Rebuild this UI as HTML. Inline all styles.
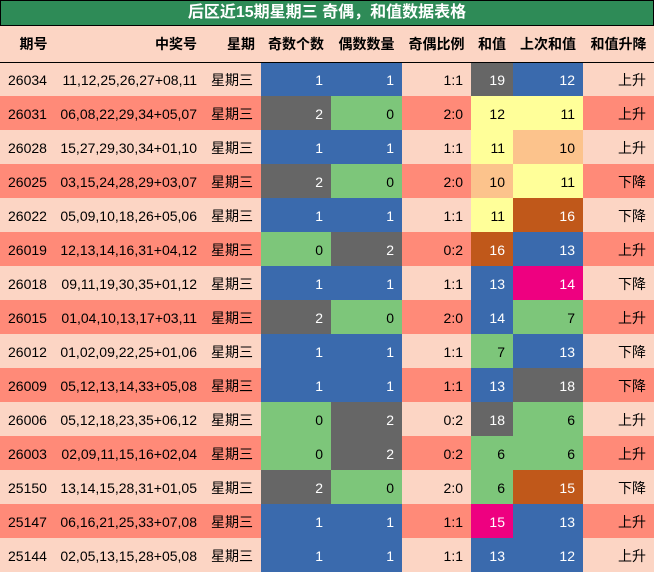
<!DOCTYPE html>
<html><head><meta charset="utf-8"><style>
*{margin:0;padding:0;box-sizing:border-box}
body{width:654px;height:573px;background:#fff;font-family:"Liberation Sans","Noto Sans CJK SC",sans-serif;overflow:hidden}
.title{position:absolute;left:0;top:0;width:654px;height:26px;background:#2e8b57;border:1px solid #000;color:#fff;font-weight:bold;font-size:16px;line-height:24px;text-align:center}
table{position:absolute;left:0;top:26px;border-collapse:collapse;table-layout:fixed;width:654px}
td{height:34px;font-size:14px;text-align:right;padding-right:8px;white-space:nowrap;color:#000;padding-top:2px}
tr.h td{height:36px;font-size:14px;font-weight:bold;text-align:center;padding:0;border-bottom:1px solid #000;background:#fcd5c4}
.p{background:#fcd5c4}.s{background:#ff8a78}
.B{background:#3a6aad;color:#fff}.G{background:#666;color:#fff}.N{background:#7dc67a}.Y{background:#ffff99}.O{background:#fcc38c}.R{background:#c0581a;color:#fff}.M{background:#ee0080;color:#fff}
td.c1{text-align:left;padding:2px 0 0 8px}
td.c2{padding-right:6px}
</style></head><body>
<div class="title">后区近15期星期三 奇偶，和值数据表格</div>
<table>
<colgroup><col style="width:55px"><col style="width:148px"><col style="width:58px"><col style="width:70px"><col style="width:71px"><col style="width:69px"><col style="width:42px"><col style="width:70px"><col style="width:71px"></colgroup>
<tr class="h"><td style="padding-left:12px">期号</td><td style="text-align:right;padding-right:6px">中奖号</td><td style="text-align:right;padding-right:6px">星期</td><td>奇数个数</td><td>偶数数量</td><td>奇偶比例</td><td>和值</td><td>上次和值</td><td>和值升降</td></tr>
<tr class="p"><td class="c1">26034</td><td class="c2">11,12,25,26,27+08,11</td><td>星期三</td><td class="B">1</td><td class="B">1</td><td>1:1</td><td class="G">19</td><td class="B">12</td><td>上升</td></tr>
<tr class="s"><td class="c1">26031</td><td class="c2">06,08,22,29,34+05,07</td><td>星期三</td><td class="G">2</td><td class="N">0</td><td>2:0</td><td class="Y">12</td><td class="Y">11</td><td>上升</td></tr>
<tr class="p"><td class="c1">26028</td><td class="c2">15,27,29,30,34+01,10</td><td>星期三</td><td class="B">1</td><td class="B">1</td><td>1:1</td><td class="Y">11</td><td class="O">10</td><td>上升</td></tr>
<tr class="s"><td class="c1">26025</td><td class="c2">03,15,24,28,29+03,07</td><td>星期三</td><td class="G">2</td><td class="N">0</td><td>2:0</td><td class="O">10</td><td class="Y">11</td><td>下降</td></tr>
<tr class="p"><td class="c1">26022</td><td class="c2">05,09,10,18,26+05,06</td><td>星期三</td><td class="B">1</td><td class="B">1</td><td>1:1</td><td class="Y">11</td><td class="R">16</td><td>下降</td></tr>
<tr class="s"><td class="c1">26019</td><td class="c2">12,13,14,16,31+04,12</td><td>星期三</td><td class="N">0</td><td class="G">2</td><td>0:2</td><td class="R">16</td><td class="B">13</td><td>上升</td></tr>
<tr class="p"><td class="c1">26018</td><td class="c2">09,11,19,30,35+01,12</td><td>星期三</td><td class="B">1</td><td class="B">1</td><td>1:1</td><td class="B">13</td><td class="M">14</td><td>下降</td></tr>
<tr class="s"><td class="c1">26015</td><td class="c2">01,04,10,13,17+03,11</td><td>星期三</td><td class="G">2</td><td class="N">0</td><td>2:0</td><td class="B">14</td><td class="N">7</td><td>上升</td></tr>
<tr class="p"><td class="c1">26012</td><td class="c2">01,02,09,22,25+01,06</td><td>星期三</td><td class="B">1</td><td class="B">1</td><td>1:1</td><td class="N">7</td><td class="B">13</td><td>下降</td></tr>
<tr class="s"><td class="c1">26009</td><td class="c2">05,12,13,14,33+05,08</td><td>星期三</td><td class="B">1</td><td class="B">1</td><td>1:1</td><td class="B">13</td><td class="G">18</td><td>下降</td></tr>
<tr class="p"><td class="c1">26006</td><td class="c2">05,12,18,23,35+06,12</td><td>星期三</td><td class="N">0</td><td class="G">2</td><td>0:2</td><td class="G">18</td><td class="N">6</td><td>上升</td></tr>
<tr class="s"><td class="c1">26003</td><td class="c2">02,09,11,15,16+02,04</td><td>星期三</td><td class="N">0</td><td class="G">2</td><td>0:2</td><td class="N">6</td><td class="N">6</td><td>上升</td></tr>
<tr class="p"><td class="c1">25150</td><td class="c2">13,14,15,28,31+01,05</td><td>星期三</td><td class="G">2</td><td class="N">0</td><td>2:0</td><td class="N">6</td><td class="R">15</td><td>下降</td></tr>
<tr class="s"><td class="c1">25147</td><td class="c2">06,16,21,25,33+07,08</td><td>星期三</td><td class="B">1</td><td class="B">1</td><td>1:1</td><td class="M">15</td><td class="B">13</td><td>上升</td></tr>
<tr class="p"><td class="c1">25144</td><td class="c2">02,05,13,15,28+05,08</td><td>星期三</td><td class="B">1</td><td class="B">1</td><td>1:1</td><td class="B">13</td><td class="B">12</td><td>上升</td></tr>
</table>
</body></html>
